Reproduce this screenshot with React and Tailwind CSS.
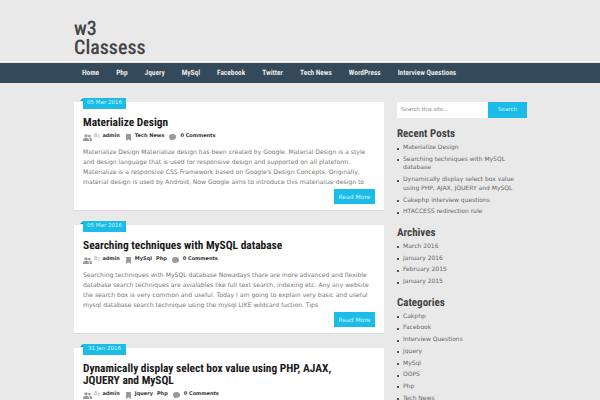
const dejavu = "font-['DejaVu_Sans',sans-serif] [text-rendering:geometricPrecision]";
const din = "font-['Roboto',sans-serif]";

const navItems = ['Home', 'Php', 'Jquery', 'MySql', 'Facebook', 'Twitter', 'Tech News', 'WordPress', 'Interview Questions'];

const posts = [
  {
    date: '05 Mar 2016',
    title: 'Materialize Design',
    tags: ['Tech News'],
    text: "Materialize Design Materialize design has been created by Google. Material Design is a style and design language that is used for responsive design and supported on all plateform. Materialize is a responsive CSS Framework based on Google's Design Concepts. Originally, material design is used by Android, Now Google aims to introduce this materialize design to",
  },
  {
    date: '05 Mar 2016',
    title: 'Searching techniques with MySQL database',
    tags: ['MySql', 'Php'],
    text: 'Searching techniques with MySQL database Nowadays thare are more advanced and flexible database search techniques are avialables like full text search, indexing etc. Any any website the search box is very common and useful. Today I am going to explain very basic and useful mysql database search technique using the mysql LIKE wildcard fuction. Tips',
  },
  {
    date: '31 Jan 2016',
    title: 'Dynamically display select box value using PHP, AJAX, JQUERY and MySQL',
    tags: ['Jquery', 'Php'],
    text: 'Dynamically display select box value using PHP, AJAX, JQUERY and MySQL with a simple example for beginners.',
  },
];

const sidebar = [
  {
    title: 'Recent Posts',
    items: ['Materialize Design', 'Searching techniques with MySQL database', 'Dynamically display select box value using PHP, AJAX, JQUERY and MySQL', 'Cakephp interview questions', 'HTACCESS redirection rule'],
  },
  { title: 'Archives', items: ['March 2016', 'January 2016', 'February 2015', 'January 2015'] },
  { title: 'Categories', items: ['Cakphp', 'Facebook', 'Interview Questions', 'Jquery', 'MySql', 'OOPS', 'Php', 'Tech News'] },
];

function UserIcon() {
  return (
    <svg className="block" width="9" height="7" viewBox="0 0 12 9" fill="#999">
      <circle cx="4" cy="2.300" r="2.200" />
      <path d="M0 9V7.500C0 5.800 1.800 5 4 5s4 .8 4 2.500V9z" />
      <circle cx="8.600" cy="2.600" r="1.800" />
      <path d="M9 5c1.800 0 3 .8 3 2.300V9H9V7c0-.8-.3-1.400-.8-2z" />
    </svg>
  );
}

function BookmarkIcon() {
  return (
    <svg className="block ml-[6px]" width="5" height="7" viewBox="0 0 7 10" fill="#999">
      <path d="M0 0h7v10L3.500 7.500 0 10z" />
    </svg>
  );
}

function CommentIcon() {
  return (
    <svg className="block ml-[5px]" width="7" height="6.500" viewBox="0 0 10 9" fill="#999">
      <ellipse cx="5" cy="4" rx="5" ry="4" />
      <path d="M2 6L1.500 9 5 7z" />
    </svg>
  );
}

function PostCard({ post }) {
  return (
    <article className="relative bg-white border-b border-[#ddd] px-[9px] pt-[14px] pb-[6px] mb-[14px]">
      <div className="absolute left-[9px] -top-[4px] w-[43px] h-[11px] bg-[#1bbde8] text-[#d6f3fb] text-center text-[5.500px] leading-[11px]">
        {post.date}
        <span className="absolute -left-[3px] top-0 border-b-[3px] border-l-[3px] border-b-[#1595b8] border-l-transparent" />
      </div>
      <h2 className={`${din} [font-stretch:75%] pr-[25px] text-[11.400px] leading-[12px] font-bold text-[#1b1b1b]`}>{post.title}</h2>
      <div className="flex items-center h-[10px] mt-[4px] text-[5px] text-[#333] font-semibold">
        <UserIcon />
        <span className="ml-[2px] text-[#aaa] font-normal">By</span>
        <span className="ml-[2px]">admin</span>
        <BookmarkIcon />
        {post.tags.map((t) => (
          <span key={t} className="ml-[4px]">{t}</span>
        ))}
        <CommentIcon />
        <span className="ml-[4px]">0 Comments</span>
      </div>
      <p className="mt-[6px] pr-[3px] text-[6.100px] leading-[10px] text-[#777] h-[40px] overflow-hidden">{post.text}</p>
      <div className="flex justify-end mt-[1px]">
        <button className="w-[41px] h-[15px] bg-[#1bbde8] text-[#d6f3fb] text-[6px] border-0">Read More</button>
      </div>
    </article>
  );
}

export default function App() {
  return (
    <div className={`${dejavu} h-[400px] w-[600px] overflow-hidden bg-[#e9e9e9]`}>
      <header className="h-[62px] border-b border-white pl-[74px] pt-[19px]">
        <div className={`${din} [font-stretch:87%] text-[20px] leading-[19px] font-medium text-[#444]`}>
          w3
          <br />
          Classess
        </div>
      </header>
      <nav className="h-[20px] mt-[1px] bg-[#34495a] flex items-center pl-[82px] gap-[17px]">
        {navItems.map((item) => (
          <a key={item} className={`${din} [font-stretch:80%] text-[7.350px] font-bold text-[#e6e6e6]`}>{item}</a>
        ))}
      </nav>
      <div className="flex pl-[74px] pt-[19px]">
        <main className="w-[310px]">
          {posts.map((post) => (
            <PostCard key={post.title} post={post} />
          ))}
        </main>
        <aside className="w-[130px] ml-[13px]">
          <div className="flex h-[16px]">
            <div className="flex-1 bg-white text-[5.500px] leading-[16px] pl-[4px] text-[#888]">Search this site...</div>
            <div className="w-[39px] bg-[#1bbde8] text-[#d6f3fb] text-[5.500px] leading-[16px] text-center">Search</div>
          </div>
          {sidebar.map((section) => (
            <section key={section.title} className="mt-[9px] mb-[8.700px]">
              <h3 className={`${din} [font-stretch:80%] text-[11px] leading-[13px] font-bold text-[#444] mb-[4px]`}>{section.title}</h3>
              <ul>
                {section.items.map((item) => (
                  <li key={item} className="relative pl-[6px] mb-[3px] text-[6px] leading-[8.700px] text-[#666]">
                    <span className="absolute left-0 top-[3.500px] w-[2px] h-[2px] bg-[#555]" />
                    {item}
                  </li>
                ))}
              </ul>
            </section>
          ))}
        </aside>
      </div>
    </div>
  );
}
